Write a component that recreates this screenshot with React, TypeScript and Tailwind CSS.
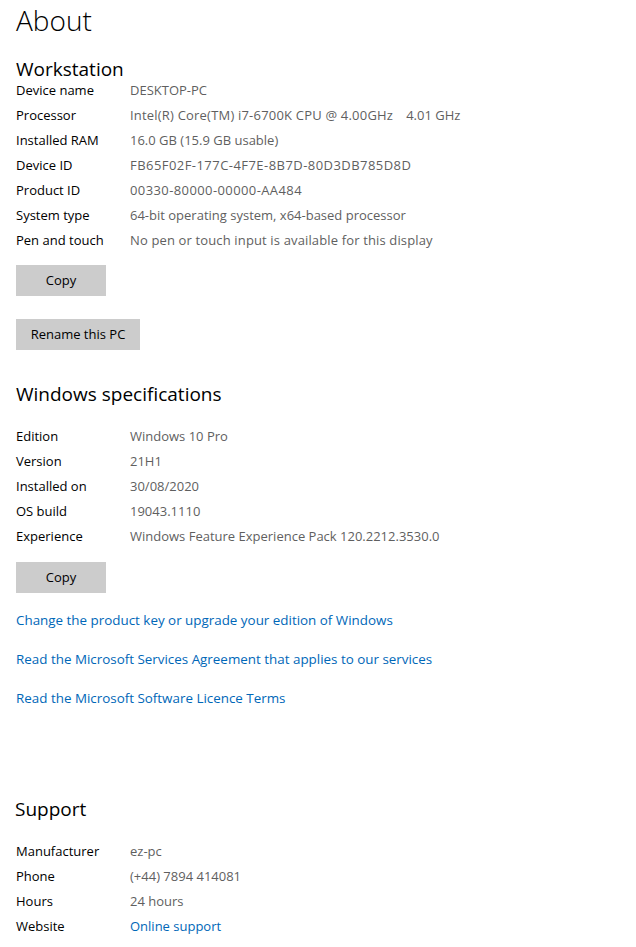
import React from "react";

const F = { fontFamily: '"Segoe UI", "Open Sans", "Noto Sans", sans-serif' };

function Row({
  label,
  value,
  link,
  cls = "",
}: {
  label: string;
  value: React.ReactNode;
  link?: boolean;
  cls?: string;
}) {
  return (
    <div className="flex h-[25px] items-center text-[13px]">
      <div className="w-[114px] shrink-0 text-[#000]">{label}</div>
      <div className={`${link ? "text-[#0067b8]" : "text-[#5f5f5f]"} ${cls}`}>{value}</div>
    </div>
  );
}

function Btn({ children, w }: { children: React.ReactNode; w: string }) {
  return (
    <button className={`${w} flex h-[31px] items-center justify-center bg-[#cccccc] text-[13px] text-[#000]`}>
      {children}
    </button>
  );
}

export default function App() {
  return (
    <div className="min-h-[947px] w-[636px] bg-white pl-[16px]" style={F}>
      <div className="flex h-[40px] items-center text-[28px] font-light leading-[40px] text-[#000]">About</div>
      <div className="mt-[20px] text-[19px] leading-[18px] text-[#000]">Workstation</div>
      <div>
        <Row label="Device name" value="DESKTOP-PC" />
        <Row
          label="Processor"
          value={
            <span className="flex">
              <span className="tracking-[0.2px]">Intel(R) Core(TM) i7-6700K CPU @ 4.00GHz</span>
              <span className="ml-[13px]">4.01 GHz</span>
            </span>
          }
        />
        <Row label="Installed RAM" value="16.0 GB (15.9 GB usable)" />
        <Row label="Device ID" value="FB65F02F-177C-4F7E-8B7D-80D3DB785D8D" cls="tracking-[0.45px]" />
        <Row label="Product ID" value="00330-80000-00000-AA484" cls="tracking-[0.4px]" />
        <Row label="System type" value="64-bit operating system, x64-based processor" />
        <Row label="Pen and touch" value="No pen or touch input is available for this display" cls="tracking-[0.14px]" />
      </div>
      <div className="mt-[12px]">
        <Btn w="w-[90px]">Copy</Btn>
      </div>
      <div className="mt-[23px]">
        <Btn w="w-[124px]">Rename this PC</Btn>
      </div>
      <div className="mt-[35px] text-[19px] leading-[18px] text-[#000]">Windows specifications</div>
      <div className="mt-[21.5px]">
        <Row label="Edition" value="Windows 10 Pro" />
        <Row label="Version" value="21H1" />
        <Row label="Installed on" value="30/08/2020" />
        <Row label="OS build" value="19043.1110" />
        <Row label="Experience" value="Windows Feature Experience Pack 120.2212.3530.0" />
      </div>
      <div className="mt-[12.5px]">
        <Btn w="w-[90px]">Copy</Btn>
      </div>
      <div className="mt-[17px] text-[13.4px] leading-[20px] text-[#0067b8]">
        Change the product key or upgrade your edition of Windows
      </div>
      <div className="mt-[19px] text-[13.4px] leading-[20px] text-[#0067b8]">
        Read the Microsoft Services Agreement that applies to our services
      </div>
      <div className="mt-[19px] text-[13.4px] leading-[20px] text-[#0067b8]">
        Read the Microsoft Software Licence Terms
      </div>
      <div className="-ml-px mt-[92px] text-[19px] leading-[18px] text-[#000]">Support</div>
      <div className="mt-[21.5px]">
        <Row label="Manufacturer" value="ez-pc" />
        <Row label="Phone" value="(+44) 7894 414081" />
        <Row label="Hours" value="24 hours" />
        <Row label="Website" value="Online support" link />
      </div>
    </div>
  );
}
